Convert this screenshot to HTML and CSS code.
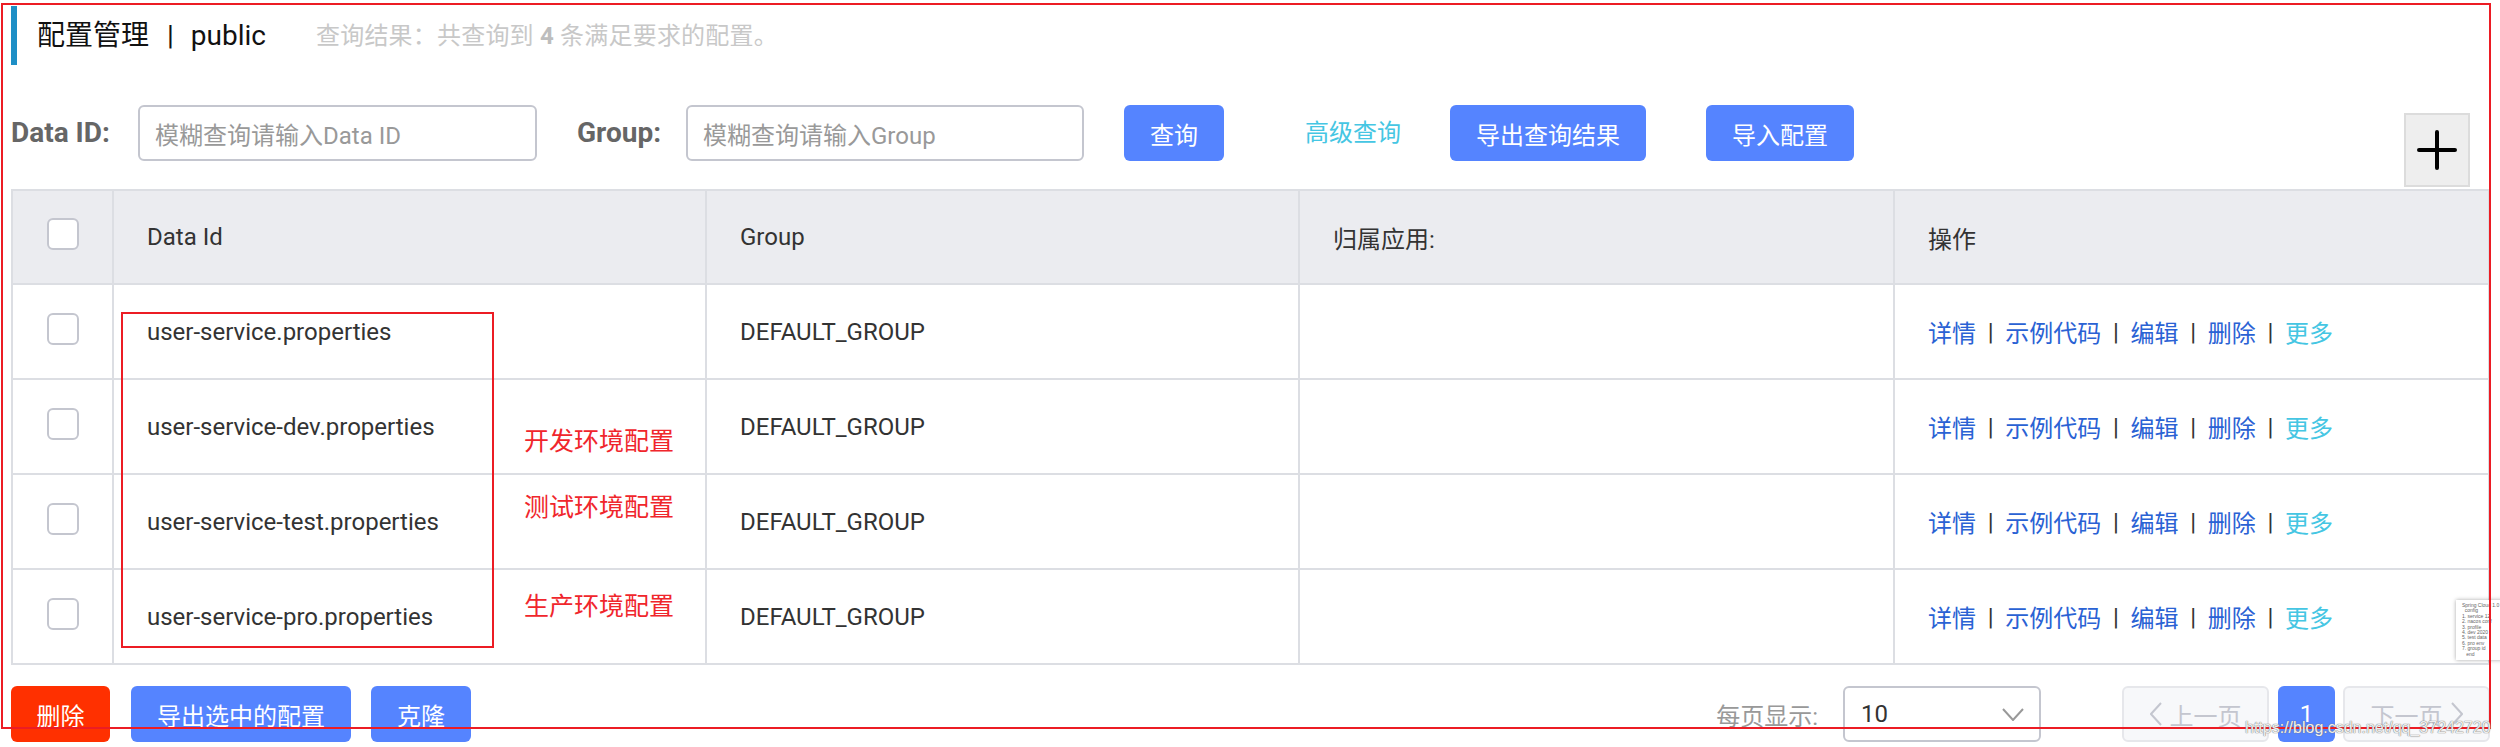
FILE: index.html
```html
<!DOCTYPE html>
<html lang="zh-CN">
<head>
<meta charset="utf-8">
<title>配置管理</title>
<link rel="stylesheet" href="styles.css">
</head>
<body>
<div class="page">
  <div class="main">
    <div class="title-bar">
      <span class="title">配置管理</span><span class="title-sep">|</span><span class="title-ns">public</span>
      <span class="summary">查询结果：共查询到 <b>4</b> 条满足要求的配置。</span>
    </div>

    <div class="filter">
      <span class="f-label f-label-id">Data ID:</span>
      <div class="input input-id"><span class="ph">模糊查询请输入Data ID</span></div>
      <span class="f-label f-label-group">Group:</span>
      <div class="input input-group"><span class="ph">模糊查询请输入Group</span></div>
      <button class="btn primary btn-query">查询</button>
      <span class="adv">高级查询</span>
      <button class="btn primary btn-export">导出查询结果</button>
      <button class="btn primary btn-import">导入配置</button>
      <button class="add-btn" aria-label="add">
        <svg width="40" height="40" viewBox="0 0 40 40"><path d="M20 2V38M2 20H38" stroke="#000" stroke-width="4" stroke-linecap="round" fill="none"/></svg>
      </button>
    </div>

    <div class="table">
      <div class="row head">
        <div class="cell c-check"><span class="checkbox"></span></div>
        <div class="cell">Data Id</div>
        <div class="cell">Group</div>
        <div class="cell">归属应用:</div>
        <div class="cell">操作</div>
      </div>
      <div class="row">
        <div class="cell c-check"><span class="checkbox"></span></div>
        <div class="cell">user-service.properties</div>
        <div class="cell">DEFAULT_GROUP</div>
        <div class="cell"></div>
        <div class="cell ops"><a>详情</a><span class="sep">|</span><a>示例代码</a><span class="sep">|</span><a>编辑</a><span class="sep">|</span><a>删除</a><span class="sep">|</span><a class="more">更多</a></div>
      </div>
      <div class="row">
        <div class="cell c-check"><span class="checkbox"></span></div>
        <div class="cell">user-service-dev.properties</div>
        <div class="cell">DEFAULT_GROUP</div>
        <div class="cell"></div>
        <div class="cell ops"><a>详情</a><span class="sep">|</span><a>示例代码</a><span class="sep">|</span><a>编辑</a><span class="sep">|</span><a>删除</a><span class="sep">|</span><a class="more">更多</a></div>
      </div>
      <div class="row">
        <div class="cell c-check"><span class="checkbox"></span></div>
        <div class="cell">user-service-test.properties</div>
        <div class="cell">DEFAULT_GROUP</div>
        <div class="cell"></div>
        <div class="cell ops"><a>详情</a><span class="sep">|</span><a>示例代码</a><span class="sep">|</span><a>编辑</a><span class="sep">|</span><a>删除</a><span class="sep">|</span><a class="more">更多</a></div>
      </div>
      <div class="row">
        <div class="cell c-check"><span class="checkbox"></span></div>
        <div class="cell">user-service-pro.properties</div>
        <div class="cell">DEFAULT_GROUP</div>
        <div class="cell"></div>
        <div class="cell ops"><a>详情</a><span class="sep">|</span><a>示例代码</a><span class="sep">|</span><a>编辑</a><span class="sep">|</span><a>删除</a><span class="sep">|</span><a class="more">更多</a></div>
      </div>
    </div>

    <div class="footer">
      <button class="btn danger btn-del">删除</button>
      <button class="btn primary btn-export-sel">导出选中的配置</button>
      <button class="btn primary btn-clone">克隆</button>
      <div class="pager-area">
        <span class="per-page">每页显示:</span>
        <div class="select"><span>10</span>
          <svg width="22" height="13" viewBox="0 0 22 13"><polyline points="1,1 11,12 21,1" fill="none" stroke="#999" stroke-width="2"/></svg>
        </div>
        <div class="pg pg-prev">
          <svg width="12" height="24" viewBox="0 0 12 24"><polyline points="11,1 1,12 11,23" fill="none" stroke="#c4c6cf" stroke-width="2"/></svg>
          <span>上一页</span>
        </div>
        <div class="pg-num">1</div>
        <div class="pg pg-next">
          <span>下一页</span>
          <svg width="12" height="24" viewBox="0 0 12 24"><polyline points="1,1 11,12 1,23" fill="none" stroke="#c4c6cf" stroke-width="2"/></svg>
        </div>
      </div>
    </div>
  </div>

  <div class="anno-box"></div>
  <div class="anno-text anno-1">开发环境配置</div>
  <div class="anno-text anno-2">测试环境配置</div>
  <div class="anno-text anno-3">生产环境配置</div>

  <div class="thumb">
    <div>Spring Cloud 1.0</div>
    <div>&nbsp;&nbsp;config</div>
    <div>1. service 12</div>
    <div>2. nacos conf</div>
    <div>3. profile</div>
    <div>4. dev 2020</div>
    <div>5. test data</div>
    <div>6. pro env</div>
    <div>7. group id</div>
    <div>&nbsp;&nbsp;&nbsp;end</div>
  </div>

  <div class="red-frame"></div>
  <div class="watermark">https://blog.csdn.net/qq_37242720</div>
</div>
</body>
</html>
```

FILE: styles.css
```css
* { box-sizing: border-box; }

html, body {
  margin: 0;
  padding: 0;
  background: #fff;
}

body {
  font-family: Roboto, "Noto Sans CJK SC", sans-serif;
  font-size: 24px;
  color: #333;
}

.page {
  position: relative;
  width: 2500px;
  height: 747px;
  overflow: hidden;
}

.main {
  margin-left: 11px;
  width: 2479px;
}

/* title */
.title-bar {
  margin-top: 6px;
  height: 59px;
  border-left: 6px solid #1e8fc6;
  padding-left: 20px;
  display: flex;
  align-items: center;
  line-height: 1;
}

.title {
  font-size: 28px;
  color: #111;
}

.title-sep {
  font-size: 28px;
  color: #111;
  margin: 0 17px 0 18px;
}

.title-ns {
  font-size: 28px;
  color: #111;
}

.summary {
  margin-left: 50px;
  font-size: 24px;
  color: #c8c8c8;
  letter-spacing: 0.2px;
}

.summary b {
  color: #bdbdbd;
  font-weight: bold;
}

/* filter row */
.filter {
  margin-top: 40px;
  display: flex;
  align-items: flex-start;
  padding-right: 20px;
}

.f-label {
  font-size: 28px;
  font-weight: bold;
  color: #666;
  line-height: 56px;
  height: 56px;
}

.f-label-id { width: 127px; }

.f-label-group {
  width: 109px;
  margin-left: 40px;
}

.input {
  height: 56px;
  border: 2px solid #c4c6cf;
  border-radius: 6px;
  padding-left: 15px;
  display: flex;
  align-items: center;
  background: #fff;
}

.input-id { width: 399px; }
.input-group { width: 398px; }

.ph { color: #999; }

.btn {
  height: 56px;
  border: none;
  border-radius: 6px;
  font-family: inherit;
  font-size: 24px;
  color: #fff;
  padding: 0;
  text-align: center;
}

.primary { background: #5584ff; }
.danger { background: #ff3000; }

.btn-query { width: 100px; margin-left: 40px; }

.adv {
  width: 96px;
  margin-left: 81px;
  line-height: 56px;
  color: #45c6e3;
  white-space: nowrap;
}

.btn-export { width: 196px; margin-left: 49px; }
.btn-import { width: 148px; margin-left: 60px; }

.add-btn {
  margin-left: auto;
  margin-top: 8px;
  width: 66px;
  height: 74px;
  background: #eeeeee;
  border: 2px solid #dcdcdc;
  padding: 0;
  display: flex;
  align-items: center;
  justify-content: center;
}

/* table */
.table {
  margin-top: 2px;
  border-top: 2px solid #dcdee3;
  border-left: 2px solid #dcdee3;
}

.row {
  display: grid;
  grid-template-columns: 101px 593px 593px 595px 595px;
  height: 95px;
  border-bottom: 2px solid #dcdee3;
  background: #fff;
}

.row.head {
  height: 94px;
  background: #ebecf0;
}

.cell {
  border-right: 2px solid #dcdee3;
  display: flex;
  align-items: center;
  padding-left: 33px;
  white-space: nowrap;
}

.c-check {
  justify-content: center;
  padding-left: 0;
}

.checkbox {
  width: 32px;
  height: 32px;
  border: 2px solid #c4c6cf;
  border-radius: 6px;
  background: #fff;
  margin-bottom: 6px;
}

.ops a { color: #2a62d4; }
.ops a.more { color: #45c6e3; }

.ops .sep {
  color: #333;
  margin: 0 11.7px;
}

/* footer */
.footer {
  margin-top: 21px;
  display: flex;
  align-items: center;
  height: 56px;
}

.btn-del { width: 99px; }
.btn-export-sel { width: 220px; margin-left: 21px; }
.btn-clone { width: 100px; margin-left: 20px; }

.pager-area {
  margin-left: auto;
  display: flex;
  align-items: center;
}

.per-page {
  color: #999;
}

.select {
  margin-left: 25px;
  width: 198px;
  height: 56px;
  border: 2px solid #c4c6cf;
  border-radius: 6px;
  padding: 0 15px 0 16px;
  display: flex;
  align-items: center;
  justify-content: space-between;
  color: #333;
}

.pg {
  width: 147px;
  height: 56px;
  border: 2px solid #e6e7eb;
  border-radius: 6px;
  background: #f7f8fa;
  color: #c4c6cf;
  display: flex;
  align-items: center;
  justify-content: center;
  gap: 8px;
}

.pg-prev { margin-left: 81px; }
.pg-next { margin-left: 8px; }

.pg-num {
  margin-left: 9px;
  width: 57px;
  height: 56px;
  border-radius: 6px;
  background: #5584ff;
  color: #fff;
  display: flex;
  align-items: center;
  justify-content: center;
}

/* annotation overlays */
.anno-box {
  position: absolute;
  left: 121px;
  top: 312px;
  width: 373px;
  height: 336px;
  border: 2px solid #ec1c24;
}

.anno-text {
  position: absolute;
  left: 524px;
  font-size: 25px;
  line-height: 25px;
  color: #f0262c;
  white-space: nowrap;
}

.anno-1 { top: 429px; }
.anno-2 { top: 495px; }
.anno-3 { top: 594px; }

.red-frame {
  position: absolute;
  left: 1px;
  top: 3px;
  width: 2490px;
  height: 726px;
  border: 2px solid #ec1c24;
}

.thumb {
  position: absolute;
  left: 2456px;
  top: 600px;
  width: 52px;
  height: 60px;
  background: #fff;
  box-shadow: 0 0 4px rgba(0, 0, 0, 0.35);
  padding: 3px 2px 2px 6px;
  font-family: "Liberation Sans", sans-serif;
  font-size: 5px;
  line-height: 5.4px;
  color: #666;
  white-space: nowrap;
  overflow: hidden;
}

.watermark {
  position: absolute;
  left: 2245px;
  top: 719px;
  font-family: "Liberation Sans", sans-serif;
  font-size: 16px;
  color: rgba(255, 255, 255, 0.9);
  text-shadow: 0 0 1px #777, 0 0 1px #777;
  white-space: nowrap;
}
```
